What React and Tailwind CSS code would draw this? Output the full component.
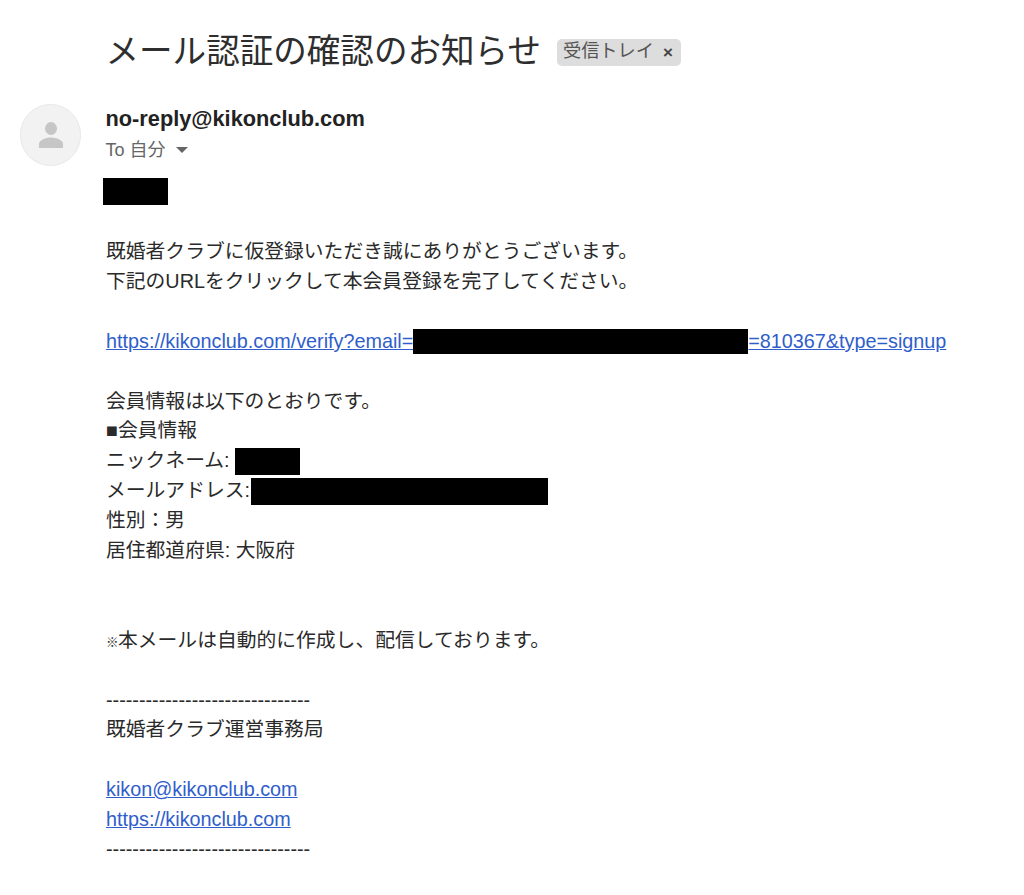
function Redact({ className }) {
  return <span className={`inline-block bg-black align-middle ${className}`} />;
}

function Link({ children }) {
  return <span className="text-[#2f5ecb] underline">{children}</span>;
}

export default function App() {
  return (
    <div className="h-[895px] w-[1024px] overflow-hidden bg-white pt-[31px] font-['Liberation_Sans','Noto_Sans_CJK_JP',sans-serif] text-[#2a2a2a]">
      {/* subject */}
      <div className="flex items-center pl-[105.5px]">
        <h1 className="text-[33.55px] leading-[42px] font-normal text-[#2e2e2e]">メール認証の確認のお知らせ</h1>
        <div className="ml-[16px] flex h-[27px] w-[124px] items-center rounded-[5px] bg-[#dddddd] pl-[6px] text-[18.2px] text-[#555555]">
          <span>受信トレイ</span>
          <span className="ml-[9px] text-[17px] leading-none font-bold text-[#444444]">×</span>
        </div>
      </div>

      {/* sender */}
      <div className="mt-[31px] flex pl-[20px]">
        <div className="flex h-[62px] w-[61px] items-center justify-center rounded-full border border-[#e8e8e8] bg-[#f2f2f2]">
          <svg width="26" height="28" viewBox="0 0 26 28" fill="#c6c6c6">
            <ellipse cx="13" cy="7.5" rx="6" ry="6.5" />
            <path d="M1 27v-4c0-4 7-6.500 12-6.500s12 2.500 12 6.500v4z" />
          </svg>
        </div>
        <div className="ml-[24.5px]">
          <div className="mt-[1px] text-[21.75px] leading-[28px] font-bold text-[#222222]">no-reply@kikonclub.com</div>
          <div className="mt-[4px] flex items-center text-[18px] leading-[26px] text-[#666666]">
            <span>To 自分</span>
            <span className="ml-[10px] h-0 w-0 border-x-[6px] border-t-[6px] border-x-transparent border-t-[#666666]" />
          </div>
        </div>
      </div>

      {/* body */}
      <div className="mt-[12px] pl-[106px] text-[19.8px] leading-[29.9px] whitespace-nowrap">
        <div className="-ml-[3px] h-[27px] w-[65px] bg-black" />
        <div className="h-[16px]" />
        <div className="mt-[16px]">既婚者クラブに仮登録いただき誠にありがとうございます。</div>
        <div>下記のURLをクリックして本会員登録を完了してください。</div>
        <div className="h-[29.9px]" />
        <div className="flex items-center">
          <Link>https://kikonclub.com/verify?email=</Link>
          <Redact className="h-[25px] w-[335px]" />
          <Link>=810367&amp;type=signup</Link>
        </div>
        <div className="h-[29.9px]" />
        <div>会員情報は以下のとおりです。</div>
        <div>■会員情報</div>
        <div className="flex items-center">
          <span>ニックネーム:</span>
          <Redact className="ml-[5px] h-[27px] w-[65px]" />
        </div>
        <div className="flex items-center">
          <span>メールアドレス:</span>
          <Redact className="ml-[1px] h-[27px] w-[297px]" />
        </div>
        <div>性別：男</div>
        <div>居住都道府県: 大阪府</div>
        <div className="h-[59.8px]" />
        <div><span className="inline-block w-[12px] text-[12.5px] leading-none font-bold">※</span>本メールは自動的に作成し、配信しております。</div>
        <div className="h-[29.9px]" />
        <div>-------------------------------</div>
        <div>既婚者クラブ運営事務局</div>
        <div className="h-[29.9px]" />
        <div><Link>kikon@kikonclub.com</Link></div>
        <div><Link>https://kikonclub.com</Link></div>
        <div>-------------------------------</div>
      </div>
    </div>
  );
}
